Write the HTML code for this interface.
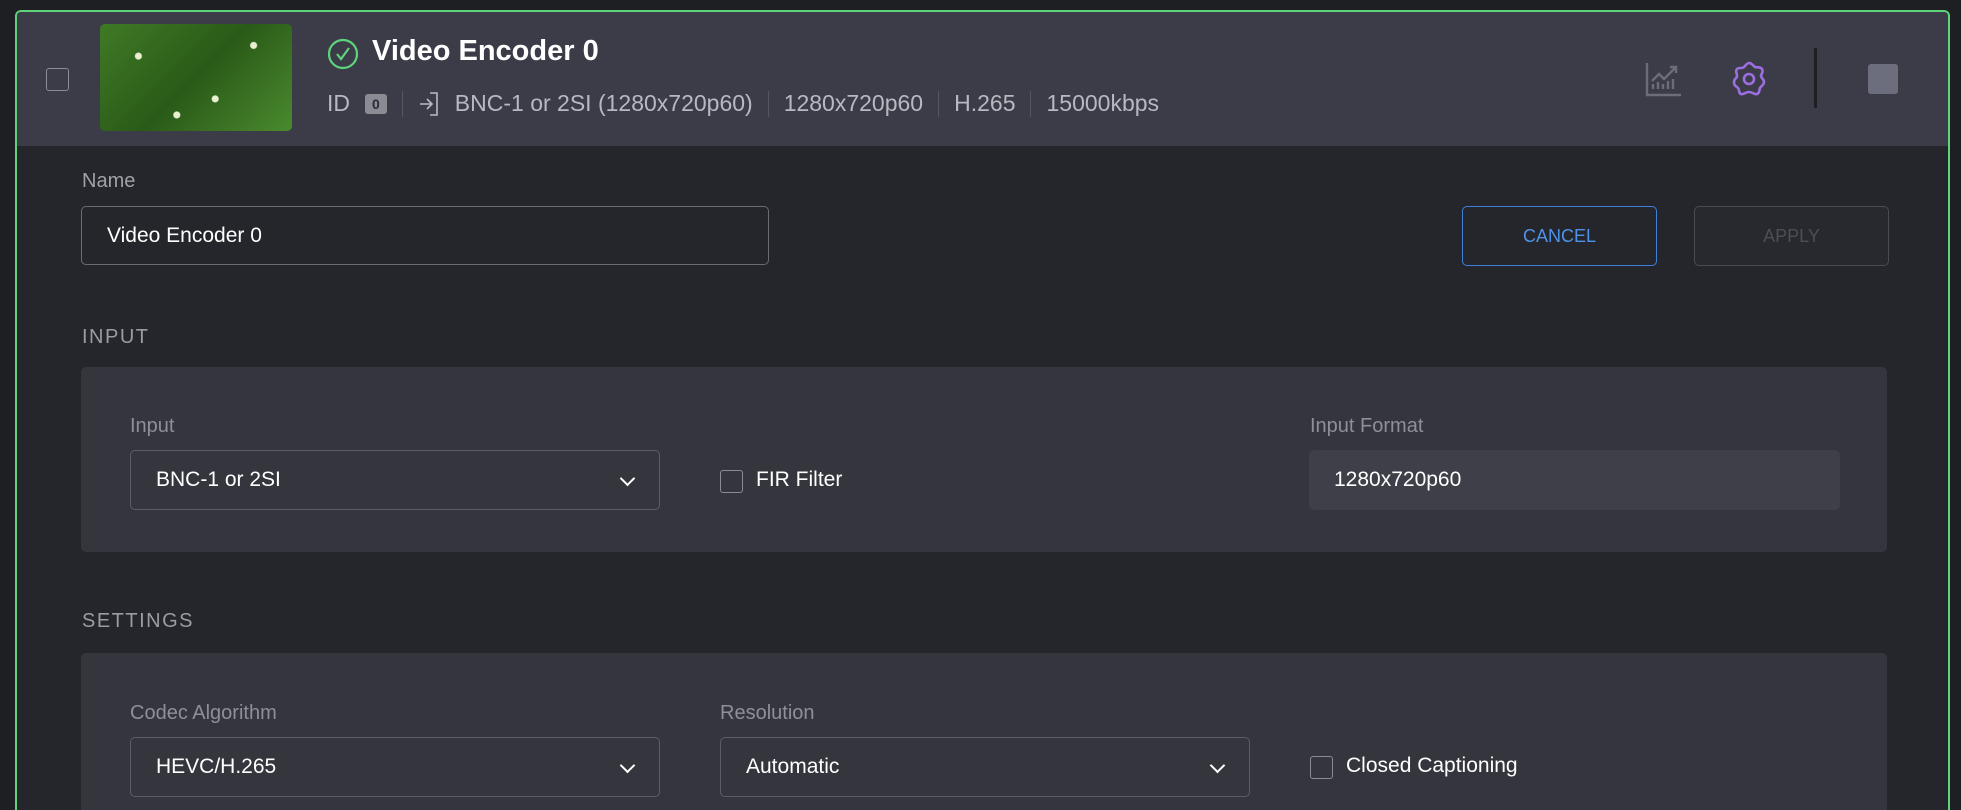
<!DOCTYPE html>
<html style="overflow:hidden;height:810px"><head><meta charset="utf-8"><style>
*{box-sizing:border-box;margin:0;padding:0}
body{width:1961px;height:810px;background:#1e1f23;font-family:"Liberation Sans",sans-serif;overflow:hidden;position:relative;color:#fff}
.a{position:absolute}
.card{left:15px;top:10px;width:1935px;height:800px;border:2px solid #5fd27c;border-bottom:none;border-radius:6px 6px 0 0;background:#25262b;overflow:hidden}
.hdr{left:0;top:0;width:100%;height:134px;background:#3c3c48}
.lbl{color:#8e8f98;font-size:20px}
.sec{color:#9a9ba3;font-size:20px;letter-spacing:1.5px}
.panel{background:#34353d;border-radius:5px}
.inp{border:1px solid #5c5d66;border-radius:5px;font-size:21px;padding-left:25px;display:flex;align-items:center}
.cb{border:1.5px solid #8a8b93;border-radius:3px;width:23px;height:23px}
.chev{position:absolute;right:26px;top:22px;width:11px;height:11px;border-right:2px solid #fff;border-bottom:2px solid #fff;transform:rotate(45deg)}
.meta{color:#b8b9c0;font-size:23px}
.sep{width:1px;height:26px;background:#55565f;display:inline-block}
</style></head><body>
<div class="a card">
 <div class="a hdr"></div>
</div>
<div class="a cb" style="left:46px;top:68px;border-color:#8a8b93"></div>
<div class="a" style="left:100px;top:24px;width:192px;height:107px;border-radius:5px;background:radial-gradient(circle at 20% 30%,#e8f0d0 0 3px,transparent 4px),radial-gradient(circle at 60% 70%,#e8f0d0 0 3px,transparent 4px),radial-gradient(circle at 80% 20%,#e8f0d0 0 3px,transparent 4px),radial-gradient(circle at 40% 85%,#e8f0d0 0 3px,transparent 4px),linear-gradient(135deg,#3f7a25,#2a5a18 50%,#4a8a2e)"></div>
<svg class="a" style="left:327px;top:38px" width="32" height="32" viewBox="0 0 32 32"><circle cx="16" cy="16" r="14" fill="none" stroke="#5fd27c" stroke-width="2.2"/><path d="M10 16l4 5 8-11" fill="none" stroke="#5fd27c" stroke-width="2.2"/></svg>
<div class="a" style="left:372px;top:35px;font-size:29px;font-weight:bold">Video Encoder 0</div>
<div class="a meta" style="left:327px;top:90px;display:flex;align-items:center;gap:15px;white-space:nowrap">
 <span>ID</span><span style="background:#8a8b93;color:#2a2a33;font-size:14px;font-weight:bold;padding:2px 7px;border-radius:3px">0</span><span class="sep"></span>
 <svg width="22" height="26" viewBox="0 0 22 26"><path d="M12 2h7v22h-7M2 13h12M9 8l5 5-5 5" fill="none" stroke="#b8b9c0" stroke-width="1.6"/></svg>
 <span>BNC-1 or 2SI (1280x720p60)</span><span class="sep"></span><span>1280x720p60</span><span class="sep"></span><span>H.265</span><span class="sep"></span><span>15000kbps</span>
</div>
<svg class="a" style="left:1645px;top:61px" width="36" height="36" viewBox="0 0 36 36"><path d="M2 2v32h34M8 28v-5M13 28v-7M18 28v-5M23 28v-8M28 28v-10M7 20l7-7 5 5 12-12M25 6h6v6" fill="none" stroke="#6c6d78" stroke-width="2.4"/></svg>
<svg class="a" style="left:1730px;top:60px" width="38" height="38" viewBox="0 0 38 38"><path d="M19 3c3 0 4 3 6 4s5-1 7 2-1 5-1 7 3 3 3 6-3 4-4 6 0 5-3 6-4-2-8-2-5 3-8 2-1-4-3-6-4-2-4-6 3-3 3-6-2-5 0-7 5 0 7-2 3-4 5-4z" fill="none" stroke="#9b6fe0" stroke-width="2.6"/><circle cx="19" cy="19" r="5" fill="none" stroke="#9b6fe0" stroke-width="2.6"/></svg>
<div class="a" style="left:1814px;top:48px;width:3px;height:60px;background:#1e1f23"></div>
<div class="a" style="left:1868px;top:64px;width:30px;height:30px;border-radius:3px;background:#6c6d7d"></div>

<div class="a lbl" style="left:82px;top:170px;color:#a0a1a8">Name</div>
<div class="a inp" style="left:81px;top:206px;width:688px;height:59px;border-color:#6a6b73">Video Encoder 0</div>
<div class="a" style="left:1462px;top:206px;width:195px;height:60px;border:1.5px solid #3d82d8;border-radius:5px;color:#4e92ea;font-size:18px;display:flex;align-items:center;justify-content:center">CANCEL</div>
<div class="a" style="left:1694px;top:206px;width:195px;height:60px;border:1.5px solid #4a4b52;border-radius:5px;background:#28292e;color:#4d4e56;font-size:18px;display:flex;align-items:center;justify-content:center">APPLY</div>

<div class="a sec" style="left:82px;top:326px">INPUT</div>
<div class="a panel" style="left:81px;top:367px;width:1806px;height:185px"></div>
<div class="a lbl" style="left:130px;top:415px">Input</div>
<div class="a inp" style="left:130px;top:450px;width:530px;height:60px">BNC-1 or 2SI<span class="chev"></span></div>
<div class="a cb" style="left:720px;top:470px"></div>
<div class="a" style="left:756px;top:468px;font-size:21px">FIR Filter</div>
<div class="a lbl" style="left:1310px;top:415px">Input Format</div>
<div class="a" style="left:1309px;top:450px;width:531px;height:60px;background:#3e3f48;border-radius:5px;font-size:21px;padding-left:25px;display:flex;align-items:center">1280x720p60</div>

<div class="a sec" style="left:82px;top:610px">SETTINGS</div>
<div class="a panel" style="left:81px;top:653px;width:1806px;height:157px;border-radius:5px 5px 0 0"></div>
<div class="a lbl" style="left:130px;top:702px">Codec Algorithm</div>
<div class="a inp" style="left:130px;top:737px;width:530px;height:60px">HEVC/H.265<span class="chev"></span></div>
<div class="a lbl" style="left:720px;top:702px">Resolution</div>
<div class="a inp" style="left:720px;top:737px;width:530px;height:60px">Automatic<span class="chev"></span></div>
<div class="a cb" style="left:1310px;top:756px"></div>
<div class="a" style="left:1346px;top:754px;font-size:21px">Closed Captioning</div>
</body></html>
